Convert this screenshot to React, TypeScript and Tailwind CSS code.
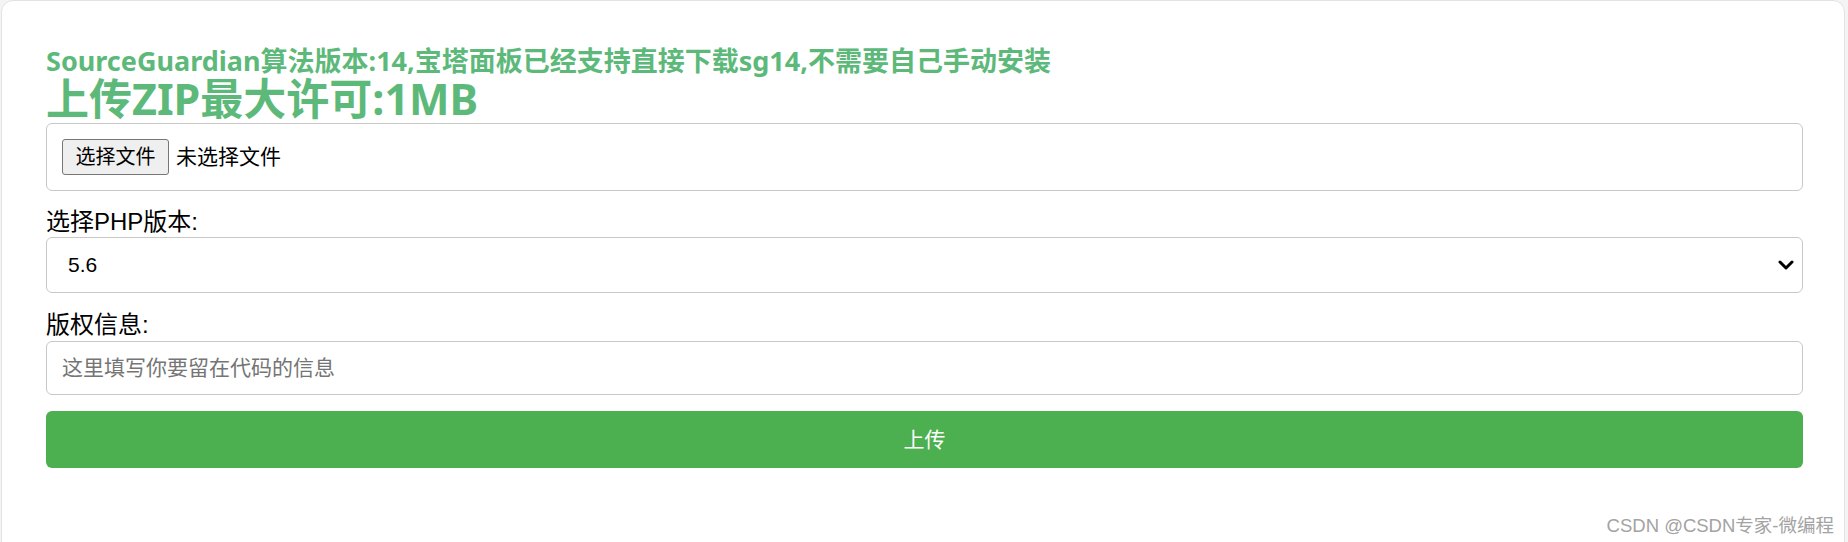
import { ChevronDown } from 'lucide-react'

const body = "font-['Liberation_Sans','Noto_Sans_CJK_SC',sans-serif]"
const heading = "font-['Noto_Sans','Noto_Sans_CJK_SC',sans-serif]"

export default function App() {
  return (
    <div className={`relative h-[542px] overflow-hidden bg-[#f4f4f4] ${body}`}>
      <div className="ml-px mr-[3px] h-[600px] rounded-[12px] border border-[#e3e3e3] bg-white pl-[44px] pr-[41px] pt-[46px]">
        <h3 className={`${heading} text-[27px] font-bold leading-[28px] text-[#5db97a]`}>
          SourceGuardian算法版本:14,宝塔面板已经支持直接下载sg14,不需要自己手动安装
        </h3>
        <h1 className={`${heading} text-[43px] font-bold leading-[48px] text-[#5db97a]`}>
          上传ZIP最大许可:1MB
        </h1>

        <form className="flex flex-col" onSubmit={(e) => e.preventDefault()}>
          <div className="flex h-[68px] items-center gap-[7px] rounded-[6px] border border-[#c8c8c8] pl-[15px]">
            <button type="button"
              className="h-[36px] w-[107px] rounded-[3px] border border-[#767676] bg-[#efefef] text-[20px] leading-none text-black">
              选择文件
            </button>
            <span className="text-[21px] text-black">未选择文件</span>
          </div>

          <label className="mt-[15px] text-[24px] leading-[31px] text-black">选择PHP版本:</label>
          <div className="flex h-[56px] items-center justify-between rounded-[6px] border border-[#c8c8c8] pl-[21px] pr-[4px]">
            <span className="text-[21px] text-black">5.6</span>
            <ChevronDown className="h-[24px] w-[24px] text-black" strokeWidth={3} />
          </div>

          <label className="mt-[16px] text-[24px] leading-[32px] text-black">版权信息:</label>
          <input placeholder="这里填写你要留在代码的信息"
            className="h-[54px] rounded-[6px] border border-[#c8c8c8] px-[15px] text-[21px] outline-none placeholder:text-[#757575]" />

          <button type="submit"
            className="mt-[16px] h-[57px] rounded-[6px] bg-[#4caf50] text-[21px] text-white">
            上传
          </button>
        </form>
      </div>

      <span className="absolute right-[14px] top-[512px] text-[18.5px] text-[#a3a3a3] [text-shadow:0_0_1px_#fff]">
        CSDN @CSDN专家-微编程
      </span>
    </div>
  )
}
